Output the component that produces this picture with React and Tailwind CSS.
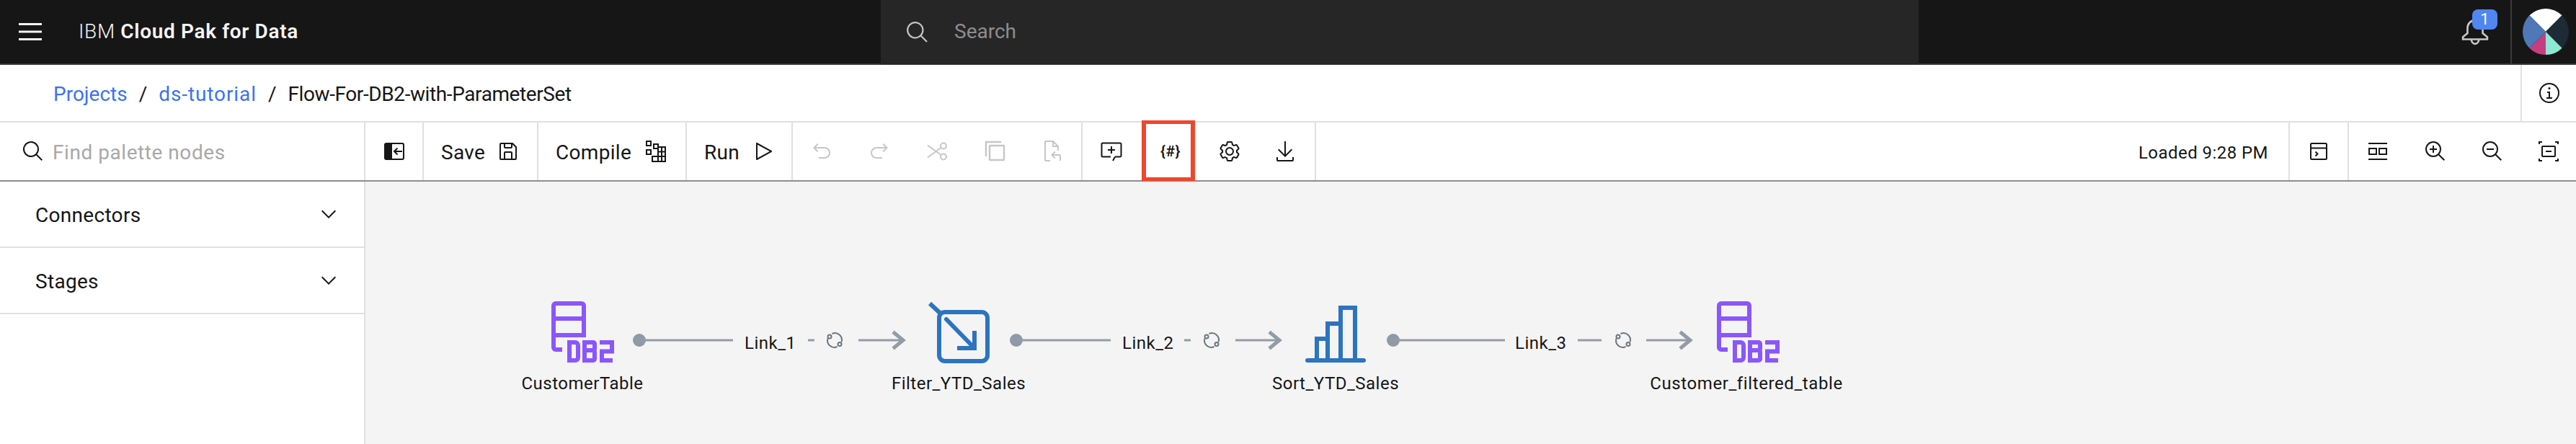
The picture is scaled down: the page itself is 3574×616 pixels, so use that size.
import React from "react";

const FONT = "font-['Roboto','Noto_Sans',sans-serif]";

const C = ({ size = 32, fill = "#161616", className = "", children }) => (
  <svg width={size} height={size} viewBox="0 0 32 32" fill={fill} className={className}>{children}</svg>
);

const SearchIcon = ({ fill, size = 32 }) => (
  <C fill={fill} size={size}><path d="M29 27.5859l-7.5521-7.5521a11.0177 11.0177 0 1 0-1.4141 1.4141L27.5859 29ZM4 13a9 9 0 1 1 9 9 9.01 9.01 0 0 1-9-9Z" /></C>
);
const Chevron = () => (
  <C><path d="M16 22 6 12l1.4-1.4 8.6 8.6 8.6-8.6L26 12z" /></C>
);
const SaveIcon = () => (
  <C><path d="M27.71,9.29l-5-5A1,1,0,0,0,22,4H6A2,2,0,0,0,4,6V26a2,2,0,0,0,2,2H26a2,2,0,0,0,2-2V10A1,1,0,0,0,27.71,9.29ZM12,6h8v4H12Zm8,20H12V18h8Zm2,0V18a2,2,0,0,0-2-2H12a2,2,0,0,0-2,2v8H6V6h4v4a2,2,0,0,0,2,2h8a2,2,0,0,0,2-2V6.41l4,4V26Z" /></C>
);
const PlayIcon = () => (
  <C><path d="M7,28a1,1,0,0,1-1-1V5a1,1,0,0,1,1.4819-.8763l20,11a1,1,0,0,1,0,1.7525l-20,11A1.0005,1.0005,0,0,1,7,28ZM8,6.6909V25.3088L24.9248,16Z" /></C>
);
const CollapseIcon = () => (
  <svg width="32" height="32" viewBox="0 0 32 32">
    <rect x="3" y="5" width="26" height="22" rx="2" fill="none" stroke="#161616" strokeWidth="2" />
    <rect x="3" y="5" width="10" height="22" rx="1" fill="#161616" />
    <path d="M27 16H16M20.5 11.5 16 16l4.5 4.5" fill="none" stroke="#161616" strokeWidth="2" />
  </svg>
);
const CompileIcon = () => (
  <svg width="32" height="32" viewBox="0 0 32 32" fill="none" stroke="#161616" strokeWidth="2">
    <rect x="3" y="2" width="6" height="6" />
    <rect x="13" y="6" width="6" height="6" />
    <rect x="3" y="14" width="6" height="6" />
    <path d="M19 10h10v20H11v-7h18M19 16.500h10M19 10v20M24 10v20M11 23v7" />
  </svg>
);
const UndoIcon = () => (
  <C fill="#c6c6c6"><path d="M20,10H7.8149l3.5874-3.5859L10,5,4,11,10,17l1.4023-1.4146L7.8179,12H20a6,6,0,0,1,0,12H12v2h8a8,8,0,0,0,0-16Z" /></C>
);
const RedoIcon = () => (
  <C fill="#c6c6c6"><path d="M12,10H24.1851L20.5977,6.4141,22,5,28,11,22,17l-1.4023-1.4146L24.1821,12H12a6,6,0,0,0,0,12h8v2H12a8,8,0,0,1,0-16Z" /></C>
);
const CutIcon = () => (
  <svg width="32" height="32" viewBox="0 0 32 32" fill="none" stroke="#c6c6c6" strokeWidth="2">
    <circle cx="25" cy="8.500" r="4" />
    <circle cx="25" cy="23.500" r="4" />
    <path d="M3 7.500 21.500 21M3 24.500 21.500 11" />
  </svg>
);
const CopyIcon = () => (
  <svg width="32" height="32" viewBox="0 0 32 32" fill="none" stroke="#c6c6c6" strokeWidth="2.400">
    <rect x="9" y="8" width="20" height="20" rx="1" />
    <path d="M4 23V3h21" />
  </svg>
);
const PasteIcon = () => (
  <svg width="32" height="32" viewBox="0 0 32 32" fill="none" stroke="#c6c6c6" strokeWidth="2">
    <path d="M13 29H7a1 1 0 0 1-1-1V3a1 1 0 0 1 1-1h10l7 7v6M17 2v7h7" />
    <path d="M27 29v-7a1 1 0 0 0-1-1H16M20 16.500 15.500 21l4.500 4.500" />
  </svg>
);
const CommentAddIcon = () => (
  <svg width="32" height="32" viewBox="0 0 32 32" fill="none" stroke="#161616" strokeWidth="2">
    <path d="M4 4.500h24a1.500 1.500 0 0 1 1.500 1.500v16a1.500 1.500 0 0 1-1.500 1.500h-6l-1.500 1-2.500 4.500M15 23.500H4A1.500 1.500 0 0 1 2.500 22V6A1.500 1.500 0 0 1 4 4.500" />
    <path d="M16 9v10M11 14h10" />
  </svg>
);
const GearIcon = () => (
  <C>
    <path d="M27,16.76c0-.25,0-.5,0-.76s0-.51,0-.77l1.92-1.68A2,2,0,0,0,29.3,11L26.94,7a2,2,0,0,0-1.73-1,2,2,0,0,0-.64.1l-2.43.82a11.35,11.35,0,0,0-1.31-.75l-.51-2.52a2,2,0,0,0-2-1.61H13.64a2,2,0,0,0-2,1.61l-.51,2.52a11.48,11.48,0,0,0-1.32.75L7.43,6.06A2,2,0,0,0,6.79,6,2,2,0,0,0,5.06,7L2.7,11a2,2,0,0,0,.41,2.51L5,15.24c0,.25,0,.5,0,.76s0,.51,0,.77L3.11,18.45A2,2,0,0,0,2.7,21L5.06,25a2,2,0,0,0,1.73,1,2,2,0,0,0,.64-.1l2.43-.82a11.35,11.35,0,0,0,1.31.75l.51,2.52a2,2,0,0,0,2,1.61h4.72a2,2,0,0,0,2-1.61l.51-2.52a11.48,11.48,0,0,0,1.32-.75l2.42.82a2,2,0,0,0,.64.1,2,2,0,0,0,1.73-1L29.3,21a2,2,0,0,0-.41-2.51ZM25.21,24l-3.43-1.16a8.86,8.86,0,0,1-2.71,1.57L18.36,28H13.64l-.71-3.55a9.36,9.36,0,0,1-2.7-1.57L6.79,24,4.43,20l2.72-2.4a8.9,8.9,0,0,1,0-3.13L4.43,12,6.79,8l3.43,1.16a8.86,8.86,0,0,1,2.71-1.57L13.64,4h4.72l.71,3.55a9.36,9.36,0,0,1,2.7,1.57L25.21,8,27.57,12l-2.72,2.4a8.9,8.9,0,0,1,0,3.13L27.57,20Z" />
    <path d="M16,22a6,6,0,1,1,6-6A5.94,5.94,0,0,1,16,22Zm0-10a3.91,3.91,0,0,0-4,4,3.91,3.91,0,0,0,4,4,3.91,3.91,0,0,0,4-4A3.91,3.91,0,0,0,16,12Z" />
  </C>
);
const DownloadIcon = () => (
  <C><path d="M26 24v4H6v-4H4v4a2 2 0 0 0 2 2h20a2 2 0 0 0 2-2v-4zM26 14l-1.41-1.41L17 20.17V2h-2v18.17l-7.59-7.58L6 14l10 10 10-10z" /></C>
);
const TerminalIcon = () => (
  <svg width="32" height="32" viewBox="0 0 32 32" fill="none" stroke="#161616" strokeWidth="2">
    <rect x="5" y="5" width="22" height="22" rx="1.500" />
    <path d="M5 11.500h22M11.500 16.500 14.500 19.500 11.500 22.500" />
  </svg>
);
const LayoutIcon = () => (
  <svg width="32" height="32" viewBox="0 0 32 32" fill="none" stroke="#161616" strokeWidth="2">
    <path d="M3 5h26M3 27h26" />
    <rect x="4" y="12" width="10" height="8" />
    <rect x="18" y="12" width="10" height="8" />
  </svg>
);
const ZoomInIcon = () => (
  <C>
    <path d="M18 12h-4V8h-2v4H8v2h4v4h2v-4h4v-2z" />
    <path d="M21.448 20A10.856 10.856 0 0 0 24 13a11 11 0 1 0-11 11 10.856 10.856 0 0 0 7-2.552L27.586 29 29 27.586ZM13 22a9 9 0 1 1 9-9 9.01 9.01 0 0 1-9 9z" />
  </C>
);
const ZoomOutIcon = () => (
  <C>
    <path d="M8 12h10v2H8z" />
    <path d="M21.448 20A10.856 10.856 0 0 0 24 13a11 11 0 1 0-11 11 10.856 10.856 0 0 0 7-2.552L27.586 29 29 27.586ZM13 22a9 9 0 1 1 9-9 9.01 9.01 0 0 1-9 9z" />
  </C>
);
const FitIcon = () => (
  <svg width="32" height="32" viewBox="0 0 32 32" fill="none" stroke="#161616" strokeWidth="2">
    <path d="M3 6V3h4M25 3h4v3M3 26v3h4M25 29h4v-3" />
    <rect x="7" y="9" width="18" height="14" rx="1" />
    <path d="M12 16h8" />
  </svg>
);
const InfoIcon = () => (
  <C>
    <path d="M17 22v-8h-4v2h2v6h-3v2h8v-2h-3z" />
    <path d="M16 8a1.500 1.500 0 1 0 1.500 1.500A1.500 1.500 0 0 0 16 8z" />
    <path d="M16 30a14 14 0 1 1 14-14 14 14 0 0 1-14 14zm0-26a12 12 0 1 0 12 12A12 12 0 0 0 16 4z" />
  </C>
);

const Btn = ({ children }) => (
  <div className="flex h-full w-[80px] shrink-0 items-center justify-center">{children}</div>
);

const Avatar = () => (
  <svg width="64" height="64" viewBox="-32 -32 64 64">
    <path d="M0 0 L-22.630 -22.630 A32 32 0 0 1 22.630 -22.630 Z" fill="#ffffff" />
    <path d="M0 0 L22.630 -22.630 A32 32 0 0 1 22.630 22.630 Z" fill="#1c2b35" />
    <path d="M0 0 L22.630 22.630 A32 32 0 0 1 0 32 Z" fill="#8fe8d4" />
    <path d="M0 0 L0 32 A32 32 0 0 1 -22.630 22.630 Z" fill="#c63e7f" />
    <path d="M0 0 L-22.630 22.630 A32 32 0 0 1 -22.630 -22.630 Z" fill="#4f78b8" />
  </svg>
);

const Db2 = ({ x, y }) => (
  <g transform={`translate(${x} ${y})`} fill="none" stroke="#8a56ff" strokeWidth="6">
    <path d="M3 47V6a3 3 0 0 1 3-3h36a3 3 0 0 1 3 3v41H3" />
    <path d="M3 24h42" />
    <path d="M3 45v19a3 3 0 0 0 3 3h9" />
    <path d="M25 57h8a4 4 0 0 1 4 4v17a4 4 0 0 1-4 4h-8z" />
    <path d="M46 57h12a2 2 0 0 1 2 2v7a2 2 0 0 1-2 2H49a2 2 0 0 1 0 0h9a2 2 0 0 1 2 2v10a2 2 0 0 1-2 2H46zM46 57v25M46 68h11" />
    <path d="M67 57h17v12.500H70v12.500h15" />
  </g>
);

const Cycle = ({ x, y }) => (
  <g transform={`translate(${x} ${y})`} fill="none" stroke="#6a7680" strokeWidth="2">
    <path d="M-3.500 -9A9.500 9.500 0 0 1 9.500 2.500" />
    <path d="M3.500 9A9.500 9.500 0 0 1 -9.500 -2.500" />
    <circle cx="-7" cy="-5" r="2.500" />
    <circle cx="7" cy="5.500" r="2.500" />
  </g>
);

const Link = ({ x1, x2, gaps, cx, ax1, ax2 }) => (
  <g>
    <circle cx={x1} cy="472" r="9" fill="#8e9aa5" />
    <path d={`M${x1} 472H${x2}`} stroke="#929ca6" strokeWidth="3" />
    {gaps}
    <Cycle x={cx} y={472} />
    <path d={`M${ax1} 472H${ax2}`} stroke="#929ca6" strokeWidth="3" />
    <path d={`M${ax2 - 14} 460.500 ${ax2} 472 ${ax2 - 14} 483.500`} fill="none" stroke="#929ca6" strokeWidth="5" />
  </g>
);

const Label = ({ className, children }) => (
  <div className={`absolute text-[24px] leading-[28px] tracking-[0.5px] whitespace-nowrap text-[#161616] ${className}`}>{children}</div>
);

export default function App() {
  return (
    <div className={`flex h-[616px] w-[3574px] flex-col overflow-hidden bg-white ${FONT}`}>
      {/* Top bar */}
      <header className="flex h-[90px] shrink-0 border-b-2 border-[#393939] bg-[#161616]">
        <div className="flex w-[1222px] shrink-0 items-center">
          <svg width="32" height="26" viewBox="0 0 32 26" className="ml-[26px]" fill="#f4f4f4">
            <rect y="1" width="32" height="3" />
            <rect y="11.500" width="32" height="3" />
            <rect y="22" width="32" height="3" />
          </svg>
          <div className="ml-[51px] text-[28px] leading-none tracking-[0.65px] text-[#f4f4f4]">
            <span className="font-light">IBM </span>
            <span className="font-semibold">Cloud Pak for Data</span>
          </div>
        </div>
        <div className="mb-[-1px] flex w-[1440px] shrink-0 items-center bg-[#262626] pl-[34px]">
          <SearchIcon fill="#c6c6c6" size={34} />
          <span className="ml-[34px] mt-[-2px] text-[28px] leading-none text-[#8d8d8d]">Search</span>
        </div>
        <div className="flex flex-1 items-center justify-end">
          <div className="relative mr-[8px] flex h-full w-[60px] items-center">
            <svg width="38" height="38" viewBox="0 0 36 36" fill="none" stroke="#c6c6c6" strokeWidth="2.500" className="mt-[1px]">
              <path d="M2 27v-3l6-5v-7a10 10 0 0 1 20 0v7l6 5v3z" />
              <path d="M13 27a5 6 0 0 0 10 0" />
            </svg>
            <div className="absolute left-[15px] top-[13px] flex h-[28px] w-[35px] items-center justify-center rounded-[8px] bg-[#4f86f0] text-[22px] leading-none text-white">1</div>
          </div>
          <div className="flex h-full w-[91px] items-center justify-start border-l-2 border-[#393939] pl-[15px]">
            <Avatar />
          </div>
        </div>
      </header>

      {/* Breadcrumb */}
      <div className="flex h-[80px] shrink-0 border-b-2 border-[#e0e0e0]">
        <nav className="flex flex-1 items-center pl-[74px] pt-[4px] text-[28px] leading-none text-[#161616]">
          <span className="text-[#3b72f0]">Projects</span>
          <span className="mx-[16px]">/</span>
          <span className="tracking-[0.9px] text-[#3b72f0]">ds-tutorial</span>
          <span className="mx-[16px]">/</span>
          <span className="tracking-[-0.4px]">Flow-For-DB2-with-ParameterSet</span>
        </nav>
        <div className="flex w-[77px] items-center justify-center border-l-2 border-[#e0e0e0]">
          <InfoIcon />
        </div>
      </div>

      {/* Toolbar */}
      <div className="flex h-[82px] shrink-0 border-b-2 border-[#8d8d8d] text-[28px] leading-none tracking-[0.3px] text-[#161616]">
        <div className="flex w-[507px] shrink-0 items-center border-r-2 border-[#e0e0e0] pl-[30px]">
          <SearchIcon size={32} />
          <span className="ml-[11px] mt-[3px] tracking-[0.55px] text-[#a8a8a8]">Find palette nodes</span>
        </div>
        <div className="flex w-[81px] shrink-0 items-center justify-center border-r-2 border-[#e0e0e0]"><CollapseIcon /></div>
        <div className="flex w-[159px] shrink-0 items-center border-r-2 border-[#e0e0e0] pl-[24px]">
          <span className="mt-[3px]">Save</span>
          <span className="ml-[16px]"><SaveIcon /></span>
        </div>
        <div className="flex w-[206px] shrink-0 items-center border-r-2 border-[#e0e0e0] pl-[24px]">
          <span className="mt-[3px]">Compile</span>
          <span className="ml-[18px]"><CompileIcon /></span>
        </div>
        <div className="flex w-[147px] shrink-0 items-center border-r-2 border-[#e0e0e0] pl-[24px]">
          <span className="mt-[3px]">Run</span>
          <span className="ml-[17px]"><PlayIcon /></span>
        </div>
        <div className="flex w-[402px] shrink-0 items-center border-r-2 border-[#e0e0e0]">
          <Btn><UndoIcon /></Btn>
          <Btn><RedoIcon /></Btn>
          <Btn><CutIcon /></Btn>
          <Btn><CopyIcon /></Btn>
          <Btn><PasteIcon /></Btn>
        </div>
        <div className="flex w-[324px] shrink-0 items-center border-r-2 border-[#e0e0e0]">
          <Btn><CommentAddIcon /></Btn>
          <div className="relative flex h-full w-[84px] shrink-0 items-center justify-center">
            <span className="text-[21px] font-semibold leading-none tracking-[0.5px]">{"{#}"}</span>
            <div className="absolute -top-[3px] bottom-[-1px] left-[2px] w-[74px] border-x-[6px] border-y-[5px] border-[#f0462c]"></div>
          </div>
          <Btn><GearIcon /></Btn>
          <div className="flex h-full w-[74px] shrink-0 items-center justify-center"><DownloadIcon /></div>
        </div>
        <div className="flex flex-1 items-center justify-end pr-[28px] text-[24px] tracking-[0.45px]">
          <span className="mt-[3px]">Loaded 9:28 PM</span>
        </div>
        <div className="flex w-[84px] shrink-0 items-center justify-center border-x-2 border-[#e0e0e0]"><TerminalIcon /></div>
        <div className="flex w-[315px] shrink-0 items-center">
          <div className="flex h-full w-[80px] shrink-0 items-center justify-center"><LayoutIcon /></div>
          <div className="flex h-full w-[79px] shrink-0 items-center justify-center"><ZoomInIcon /></div>
          <div className="flex h-full w-[79px] shrink-0 items-center justify-center"><ZoomOutIcon /></div>
          <div className="flex h-full w-[77px] shrink-0 items-center justify-center"><FitIcon /></div>
        </div>
      </div>

      {/* Body */}
      <div className="flex min-h-0 flex-1">
        <aside className="w-[507px] shrink-0 border-r-2 border-[#e0e0e0] bg-white text-[28px] leading-none tracking-[0.3px] text-[#161616]">
          <div className="flex h-[92px] items-center justify-between border-b-2 border-[#e0e0e0] pl-[49px] pr-[33px]">
            <span className="mt-[3px]">Connectors</span>
            <Chevron />
          </div>
          <div className="flex h-[92px] items-center justify-between border-b-2 border-[#e0e0e0] pl-[49px] pr-[33px]">
            <span className="mt-[3px]">Stages</span>
            <Chevron />
          </div>
        </aside>
        <main className="relative flex-1 overflow-hidden bg-[#f4f4f4]">
          <svg width="3067" height="364" className="absolute inset-0">
            <g transform="translate(-507 -252)">
              <Db2 x={765} y={418} />
              <Link x1={887} x2={1017} cx={1158} ax1={1191} ax2={1253}
                gaps={<path d="M1121 472H1130" stroke="#929ca6" strokeWidth="3" />} />
              <g fill="none" stroke="#2d74c0" strokeWidth="6">
                <rect x="1303" y="433" width="67" height="68" rx="8" />
                <path d="M1290 421 1305 435" />
                <path d="M1313 443 1351 482" strokeLinecap="round" />
                <path d="M1352 459V483H1328" />
              </g>
              <Link x1={1410} x2={1541} cx={1681} ax1={1714} ax2={1775}
                gaps={<path d="M1643 472H1652" stroke="#929ca6" strokeWidth="3" />} />
              <g fill="none" stroke="#2d74c0" strokeWidth="6">
                <path d="M1814 500H1892" strokeWidth="6" strokeLinecap="round" />
                <path d="M1827 498V470H1842V498" />
                <path d="M1842 470V449H1860V498" />
                <path d="M1860 449V427H1880V498" />
              </g>
              <Link x1={1933} x2={2088} cx={2252} ax1={2284} ax2={2345}
                gaps={<path d="M2189 472H2222" stroke="#929ca6" strokeWidth="3" />} />
              <Db2 x={2382} y={418} />
            </g>
          </svg>
          <Label className="left-[301px] top-[266px] -translate-x-1/2">CustomerTable</Label>
          <Label className="left-[823px] top-[266px] -translate-x-1/2">Filter_YTD_Sales</Label>
          <Label className="left-[1346px] top-[266px] -translate-x-1/2">Sort_YTD_Sales</Label>
          <Label className="left-[1916px] top-[266px] -translate-x-1/2 tracking-[0.6px]">Customer_filtered_table</Label>
          <Label className="left-[526px] top-[210px]">Link_1</Label>
          <Label className="left-[1050px] top-[210px]">Link_2</Label>
          <Label className="left-[1595px] top-[210px]">Link_3</Label>
        </main>
      </div>
    </div>
  );
}
